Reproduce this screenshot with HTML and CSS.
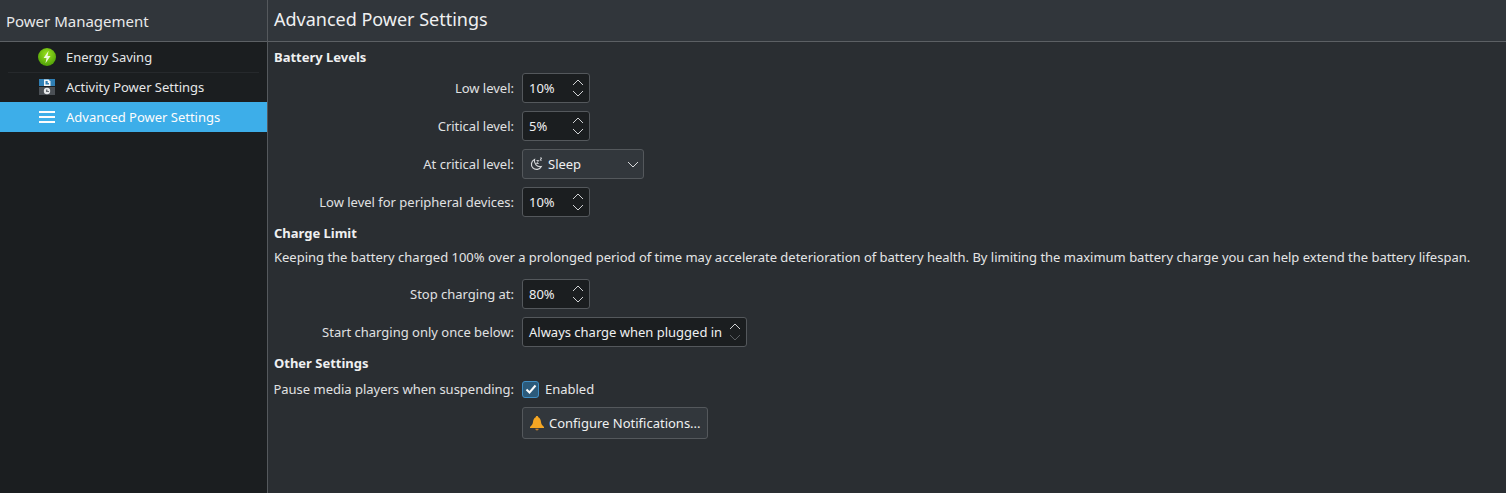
FILE: index.html
```html
<!DOCTYPE html>
<html lang="en">
<head>
<meta charset="utf-8">
<title>Power Management</title>
<link rel="stylesheet" href="styles.css">
</head>
<body>
<div class="app">
  <aside class="sidebar">
    <header class="side-head">Power Management</header>
    <ul class="nav">
      <li class="nav-item">
        <svg class="nav-icon" viewBox="0 0 18 18"><defs><radialGradient id="g" cx="50%" cy="35%" r="65%"><stop offset="0" stop-color="#9be31f"/><stop offset="1" stop-color="#4f9f08"/></radialGradient></defs><circle cx="9" cy="9" r="9" fill="url(#g)"/><path d="M10.600 2.800 5.600 10h2.900l-1 5.200 5-7.300H9.500z" fill="#eef8e0"/></svg>
        Energy Saving
      </li>
      <li class="nav-item sep">
        <svg class="nav-icon" viewBox="0 0 18 18"><rect x="1" y="1" width="16" height="7" fill="#2f7fb5"/><rect x="1" y="9" width="16" height="8" fill="#4b5055"/><path d="M6 1.500h4.500L12.500 3.500V8H6z" fill="#f2f5f7"/><path d="M7.500 3h2.200v2h1.300v1.500H7.500z" fill="#2f7fb5"/><circle cx="9" cy="13" r="3.200" fill="#e6e8ea"/><path d="M8 11.500h1.500v1.500H11v1H8z" fill="#6a6f74"/></svg>
        Activity Power Settings
      </li>
      <li class="nav-item active">
        <svg class="nav-icon" viewBox="0 0 18 18"><path d="M1 3h16v2H1zM1 8h16v2H1zM1 13h16v2H1z" fill="#fcfcfc"/></svg>
        Advanced Power Settings
      </li>
    </ul>
  </aside>
  <main class="main">
    <header class="main-head">Advanced Power Settings</header>
    <div class="content">
      <h2 class="section first">Battery Levels</h2>
      <div class="form">
        <label class="lbl">Low level:</label>
        <div class="spin w68"><span>10%</span><svg class="arrows" viewBox="0 0 12 20"><path d="M1 7l5-5 5 5M1 13l5 5 5-5"/></svg></div>
        <label class="lbl">Critical level:</label>
        <div class="spin w68"><span>5%</span><svg class="arrows" viewBox="0 0 12 20"><path d="M1 7l5-5 5 5M1 13l5 5 5-5"/></svg></div>
        <label class="lbl">At critical level:</label>
        <div class="combo">
          <svg class="small-icon" viewBox="0 0 14 14"><path d="M5.500 2.500a5.200 5.200 0 1 0 6.800 7 5.800 5.800 0 0 1-6.800-7z" fill="none" stroke="#d4d6d8" stroke-width="1.200"/><path d="M7.500 3.500h2.200L7.500 6.500h2.200M11 1h1.800L11 3.200h1.800" fill="none" stroke="#d4d6d8" stroke-width=".9"/></svg>
          <span class="combo-text">Sleep</span>
          <svg class="chev" viewBox="0 0 12 7"><path d="M1 1l5 5 5-5"/></svg>
        </div>
        <label class="lbl">Low level for peripheral devices:</label>
        <div class="spin w68"><span>10%</span><svg class="arrows" viewBox="0 0 12 20"><path d="M1 7l5-5 5 5M1 13l5 5 5-5"/></svg></div>
      </div>
      <h2 class="section">Charge Limit</h2>
      <p class="desc">Keeping the battery charged 100% over a prolonged period of time may accelerate deterioration of battery health. By limiting the maximum battery charge you can help extend the battery lifespan.</p>
      <div class="form">
        <label class="lbl">Stop charging at:</label>
        <div class="spin w68"><span>80%</span><svg class="arrows" viewBox="0 0 12 20"><path d="M1 7l5-5 5 5M1 13l5 5 5-5"/></svg></div>
        <label class="lbl">Start charging only once below:</label>
        <div class="spin w225"><span>Always charge when plugged in</span><svg class="arrows" viewBox="0 0 12 20"><path d="M1 7l5-5 5 5"/><path class="dim" d="M1 13l5 5 5-5"/></svg></div>
      </div>
      <h2 class="section last">Other Settings</h2>
      <div class="form tight">
        <label class="lbl">Pause media players when suspending:</label>
        <div class="check"><span class="box"><svg viewBox="0 0 12 12"><path d="M1.500 6.500l3 3 6-7"/></svg></span>Enabled</div>
        <span></span>
        <button class="btn" type="button"><svg class="bell" viewBox="0 0 16 16"><path d="M8 1c.7 0 1.200.5 1.300 1.200 1.800.8 2.500 2.700 2.700 4.800.2 2.200 1.300 3.500 3 4.900V13H1v-1.100c1.700-1.400 2.800-2.700 3-4.900.2-2.100.9-4 2.700-4.800C6.800 1.500 7.300 1 8 1z" fill="#f5a623"/><path d="M6.300 13.800h3.400a1.700 1.700 0 0 1-3.400 0z" fill="#c9822a"/></svg>Configure Notifications...</button>
      </div>
    </div>
  </main>
</div>
</body>
</html>
```
FILE: styles.css
```css
* { box-sizing: border-box; }
html, body { margin: 0; height: 100%; }
body {
  background: #2a2e32;
  color: #fcfcfc;
  font-family: "Noto Sans", sans-serif;
  font-size: 13px;
  line-height: 18px;
  letter-spacing: -0.01px;
  overflow: hidden;
}
.app { display: flex; height: 493px; }
.sidebar {
  width: 268px;
  flex: none;
  background: #1b1e20;
  border-right: 1px solid #55595d;
}
.side-head, .main-head {
  height: 42px;
  background: #31363b;
  border-bottom: 1px solid #5c6064;
  display: flex;
  align-items: center;
}
.side-head { padding: 0 0 0 6px; font-size: 15px; color: #e8e9ea; }
.main-head { padding: 0 0 4px 6px; font-size: 18px; color: #eff0f1; }
.nav { list-style: none; margin: 0; padding: 0; }
.nav-item {
  height: 30px;
  display: flex;
  align-items: center;
  gap: 10px;
  padding-left: 38px;
  color: #e6e7e8;
  position: relative;
}
.sep::before {
  content: "";
  position: absolute;
  left: 8px;
  right: 8px;
  top: 0;
  height: 1px;
  background: #26292c;
}
.active { background: #3daee9; color: #fcfcfc; }
.nav-icon { width: 18px; height: 18px; flex: none; }
.main { flex: 1; min-width: 0; }
.content { padding: 0 6px; }
.section {
  margin: 0;
  padding-top: 7px;
  height: 31px;
  font-size: 13px;
  line-height: 18px;
  font-weight: 700;
  color: #eff0f1;
}
.section.first { padding-top: 6px; }
.section.last { height: 33px; }
.desc { margin: 0 0 13px; height: 18px; white-space: nowrap; color: #e4e5e6; line-height: 18px; }
.form {
  display: grid;
  grid-template-columns: 240px auto;
  column-gap: 8px;
  row-gap: 8px;
  justify-content: start;
  align-items: center;
  justify-items: start;
}
.form.tight { row-gap: 9px; }
.lbl { justify-self: end; color: #e0e1e2; white-space: nowrap; }
.spin, .combo, .btn {
  height: 30px;
  border: 1px solid #54585c;
  border-radius: 3px;
  display: flex;
  align-items: center;
  color: #eff0f1;
  font: inherit;
}
.spin { background: #1b1e20; padding-left: 6px; justify-content: space-between; padding-right: 5px; }
.w68 { width: 68px; }
.w225 { width: 225px; }
.arrows { width: 12px; height: 20px; fill: none; stroke: #d0d2d4; stroke-width: 1; }
.arrows .dim { stroke: #5a5e62; }
.combo {
  width: 122px;
  background: #32373c;
  padding: 0 4px 0 6px;
}
.small-icon { width: 14px; height: 14px; flex: none; }
.combo-text { margin-left: 5px; flex: 1; }
.chev { width: 12px; height: 7px; fill: none; stroke: #d8dadc; stroke-width: 1; }
.check { display: flex; align-items: center; gap: 6px; height: 18px; color: #e6e7e8; }
.box {
  width: 17px;
  height: 17px;
  border-radius: 3px;
  background: #2c5a7a;
  border: 1px solid #3f8ec4;
  display: flex;
  align-items: center;
  justify-content: center;
}
.box svg { width: 12px; height: 12px; fill: none; stroke: #fcfcfc; stroke-width: 2; }
.btn {
  height: 32px;
  width: 186px;
  background: #32373c;
  padding: 0 0 0 6px;
  gap: 4px;
}
.bell { width: 16px; height: 16px; flex: none; }
```
